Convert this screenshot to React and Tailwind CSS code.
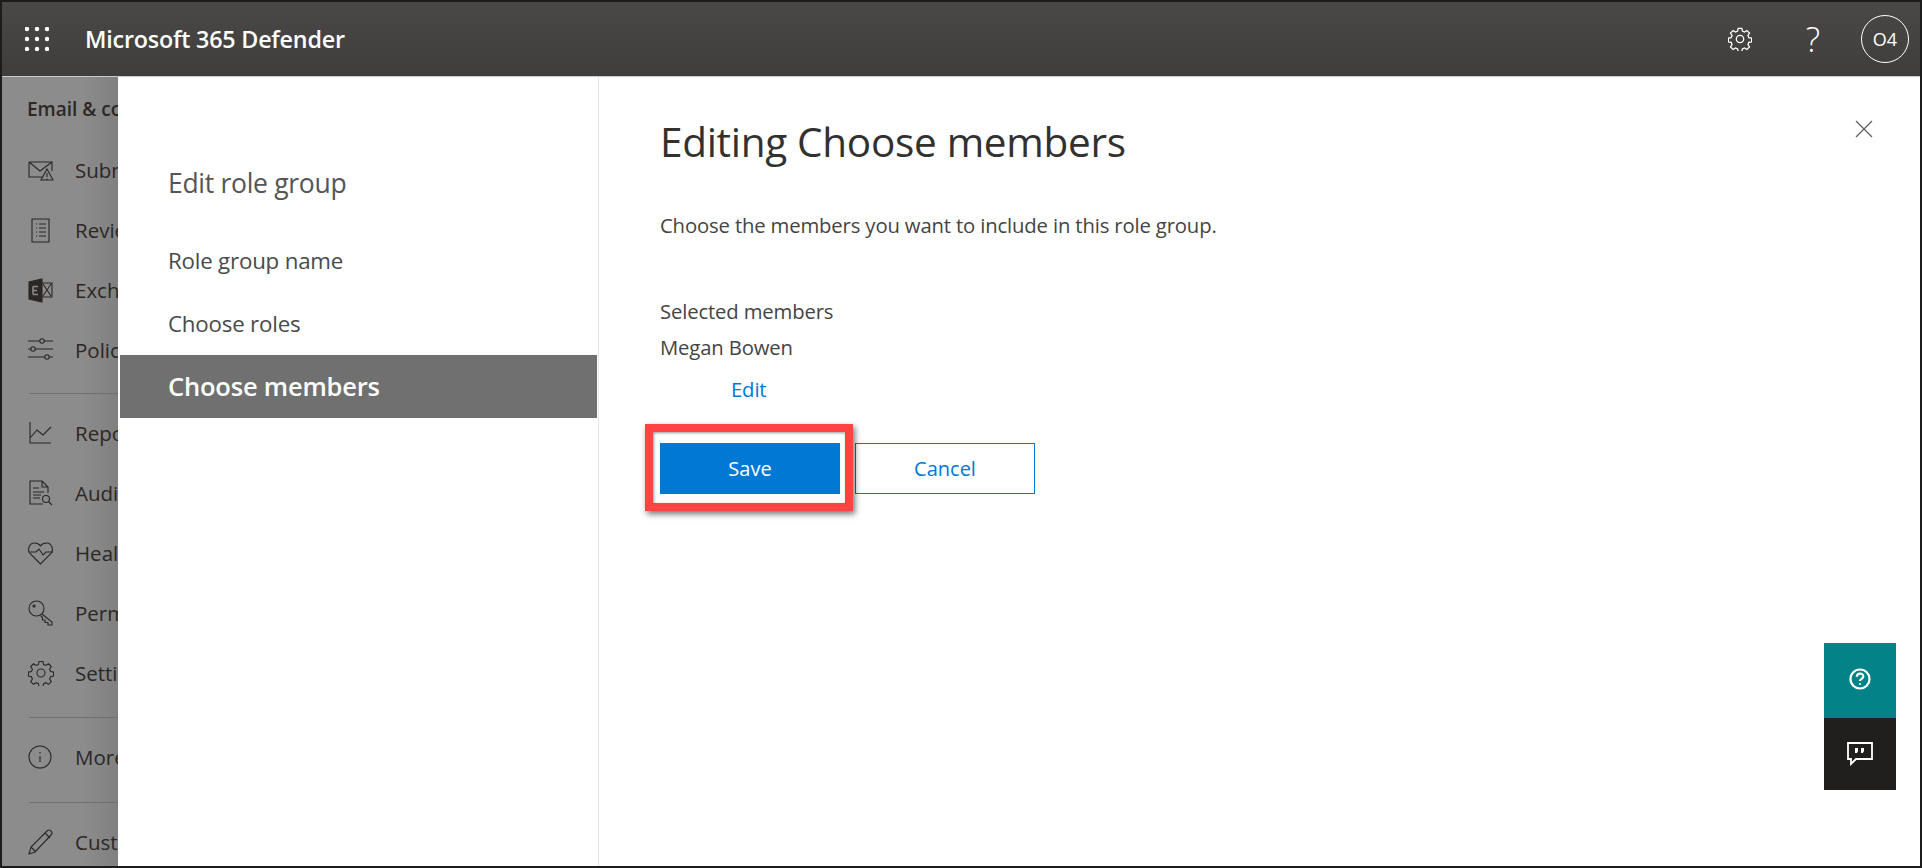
import React from "react";

const s = { fill: "none", stroke: "currentColor", strokeWidth: 1.1 };
const Ico = ({ children }) => (
  <svg width="26" height="26" viewBox="0 0 26 26" className="shrink-0" {...s}>{children}</svg>
);
const gearPath = "M11 1.500h4l.6 3 2.300 1 2.600-1.700 2.800 2.800-1.700 2.600 1 2.300 3 .6v4l-3 .6-1 2.300 1.700 2.600-2.800 2.800-2.600-1.700-2.300 1-.6 3h-4l-.6-3-2.300-1-2.600 1.700-2.800-2.800 1.700-2.600-1-2.300-3-.6v-4l3-.6 1-2.300-1.700-2.600 2.800-2.800 2.600 1.700 2.300-1z";

const icons = {
  mail: <Ico><path d="M1 5h23v9M1 5v15h13M1 5l11 9 12-9" /><path d="M19 12l6 11H13zM19 16v4M19 21.500v1" /></Ico>,
  review: <Ico><path d="M4 2h17v23H4z" /><path d="M8 7h1M11 7h7M8 11h1M11 11h7M8 15h1M11 15h7M8 19h1M11 19h7" /></Ico>,
  exchange: <Ico><path d="M14 2v23L1 22V5z" fill="currentColor" /><path d="M14 6h10v14H14M15 7l8 12M23 7l-8 12" /><path d="M5 9.500h5M5 13.500h4M5 17.500h5M5 9.500v8" stroke="#8a8a8a" strokeWidth="1.600" /></Ico>,
  policy: <Ico><path d="M0 4h12M16 4h9M0 12h3M7 12h18M0 20h17M21 20h4" /><circle cx="14" cy="4" r="2.200" /><circle cx="5" cy="12" r="2.200" /><circle cx="19" cy="20" r="2.200" /></Ico>,
  chart: <Ico><path d="M2 2v21h21M2 18l7-8 6 5 8-8" /></Ico>,
  audit: <Ico><path d="M14 1H2v23h13M14 1l6 6v6M14 1v6h6" /><path d="M5 8h6M5 12h11M5 15h8M5 18h7" /><circle cx="18" cy="19" r="3.500" /><path d="M20.500 21.500L24 25" /></Ico>,
  health: <Ico><path d="M12.500 24L2 13.500C-1 10 1 3 6.500 3c3 0 5 1.500 6 3 1-1.500 3-3 6-3C24 3 26 10 23 13.500z" /><path d="M1 12h7l3-3 4 6 3-3h7" /></Ico>,
  key: <Ico><circle cx="8.500" cy="8.500" r="7.500" /><circle cx="6" cy="6" r="1" fill="currentColor" /><path d="M14 14l10 8v3h-4v-2.500h-3V20h-2.500v-2.500L12.500 15.500" /></Ico>,
  gear: <Ico><path d={gearPath} /><circle cx="13" cy="13" r="4" /></Ico>,
  info: <Ico><circle cx="12" cy="13" r="11" /><path d="M12 12v6M12 8v1.500" /></Ico>,
  pencil: <Ico><path d="M1 25l2-7L19 2c1.500-1.500 3-1 4 0s1.500 2.500 0 4L7 23zM3 18l5 5M17 4l5 5" /></Ico>,
};

const Nav = ({ icon, label }) => (
  <div className="flex h-[60px] items-center gap-[21px] pl-[26px] text-[20.500px] text-[#2b2725]">
    {icons[icon]}
    <span className="whitespace-nowrap">{label}</span>
  </div>
);
const Rule = ({ className }) => <div className={`ml-[27px] h-px bg-[#6f6f6f] ${className}`} />;

export default function App() {
  return (
    <div className="flex h-[868px] w-[1922px] flex-col overflow-hidden border-2 border-[#1c1c1c] bg-white font-['Open_Sans','Noto_Sans',sans-serif]">
      <header className="flex h-[75px] shrink-0 items-center border-b border-[#c9c9c9] bg-gradient-to-b from-[#4a4846] to-[#403e3d] text-white">
        <svg width="24" height="24" viewBox="0 0 24 24" className="ml-[23px]" fill="white">
          {[2, 12, 22].flatMap((y) => [2, 12, 22].map((x) => <circle key={`${x}-${y}`} cx={x} cy={y} r="2.200" />))}
        </svg>
        <span className="ml-[36px] text-[23.300px] font-semibold tracking-[-0.2px]">Microsoft 365 Defender</span>
        <div className="ml-auto flex items-center">
          <svg width="24" height="24" viewBox="0 0 26 26" fill="none" stroke="white" strokeWidth="1.400"><path d={gearPath} /><circle cx="13" cy="13" r="4" /></svg>
          <span className="ml-[54px] text-[34px] font-light leading-none">?</span>
          <span className="ml-[41px] mr-[11px] flex h-[48px] w-[48px] items-center justify-center rounded-full border border-white text-[18px]">O4</span>
        </div>
      </header>

      <div className="relative flex min-h-0 flex-1">
        <aside className="w-[116px] shrink-0 overflow-hidden bg-gradient-to-r from-[#8c8c8c] from-70% to-[#808080]">
          <div className="flex h-[63px] items-center pt-[2px] pl-[25px] text-[19px] font-semibold whitespace-nowrap text-[#2b2725]">Email &amp; collaboration</div>
          <Nav icon="mail" label="Submissions" />
          <Nav icon="review" label="Review" />
          <Nav icon="exchange" label="Exchange message trace" />
          <Nav icon="policy" label="Policies &amp; rules" />
          <Rule className="mt-[13px] mb-[9px]" />
          <Nav icon="chart" label="Reports" />
          <Nav icon="audit" label="Audit" />
          <Nav icon="health" label="Health" />
          <Nav icon="key" label="Permissions" />
          <Nav icon="gear" label="Settings" />
          <Rule className="mt-[14px] mb-[9px]" />
          <Nav icon="info" label="More resources" />
          <Rule className="mt-[15px] mb-[9px]" />
          <Nav icon="pencil" label="Customize" />
        </aside>

        <main className="flex min-w-0 flex-1 bg-white">
          <nav className="w-[481px] shrink-0 border-r border-[#e6e6e6] pt-[88px]">
            <div className="pl-[50px] text-[26.500px] leading-[36px] tracking-[-0.3px] text-[#555555]">Edit role group</div>
            <div className="mt-[45px] pl-[50px] text-[22.300px] leading-[30px] font-medium tracking-[-0.2px] text-[#4a4a4a]">Role group name</div>
            <div className="mt-[33px] pl-[50px] text-[22.300px] leading-[30px] font-medium tracking-[-0.2px] text-[#4a4a4a]">Choose roles</div>
            <div className="mt-[16px] ml-[2px] mr-[1px] flex h-[63px] items-center bg-[#707070] pl-[48px] text-[25.500px] font-semibold tracking-[-0.2px] text-white">Choose members</div>
          </nav>

          <section className="relative flex-1 pl-[61px]">
            <h1 className="mt-[39px] text-[40.500px] leading-[52px] font-normal tracking-[-0.3px] text-[#323130]">Editing Choose members</h1>
            <p className="mt-[44px] text-[20.300px] leading-[26px] tracking-[-0.15px] text-[#444444]">Choose the members you want to include in this role group.</p>
            <p className="mt-[60px] text-[20.300px] leading-[26px] tracking-[-0.15px] text-[#444444]">Selected members</p>
            <p className="mt-[10px] text-[20.300px] leading-[26px] tracking-[-0.15px] text-[#444444]">Megan Bowen</p>
            <a className="mt-[16px] ml-[71px] block text-[20.300px] leading-[26px] tracking-[-0.15px] text-[#0078d4]">Edit</a>
            <div className="mt-[41px] flex gap-[15px]">
              <div className="relative">
                <button className="flex h-[51px] w-[180px] items-center justify-center bg-[#0078d4] text-[20px] font-medium text-white">Save</button>
                <div className="absolute -top-[19px] -right-[13px] -bottom-[17px] -left-[15px] border-[8px] border-[#ff4343] shadow-[2px_3px_6px_rgba(0,0,0,0.55),inset_1px_1px_3px_rgba(0,0,0,0.4)]" />
              </div>
              <button className="flex h-[51px] w-[180px] items-center justify-center border border-[#0078d4] bg-white text-[20px] text-[#0078d4]">Cancel</button>
            </div>
            <button className="absolute top-[43px] right-[47px] text-[#605e5c]" aria-label="Close">
              <svg width="18" height="18" viewBox="0 0 18 18" fill="none" stroke="currentColor" strokeWidth="1.200"><path d="M1 1l16 16M17 1L1 17" /></svg>
            </button>
          </section>
        </main>

        <div className="absolute top-[566px] right-[24px] flex w-[72px] flex-col">
          <div className="flex h-[75px] items-center justify-center bg-[#038387] pb-[3px] text-white">
            <svg width="22" height="22" viewBox="0 0 22 22" fill="none" stroke="white" strokeWidth="2.200"><circle cx="11" cy="11" r="9.500" /><path d="M7.800 8.800c0-4.300 6.500-4.300 6.500-.3 0 2.500-3.300 2.300-3.300 4.600" /><circle cx="11" cy="16" r=".6" fill="white" strokeWidth="1" /></svg>
          </div>
          <div className="flex h-[72px] items-center justify-center bg-[#201f1e]">
            <svg width="26" height="24" viewBox="0 0 26 24" fill="none" stroke="white" strokeWidth="1.800"><path d="M1 1h24v16H9l-5 5v-5H1z" /><path d="M8 6h3v3l-1 2H8zM14 6h3v3l-1 2h-2z" fill="white" stroke="none" /></svg>
          </div>
        </div>
      </div>
    </div>
  );
}
